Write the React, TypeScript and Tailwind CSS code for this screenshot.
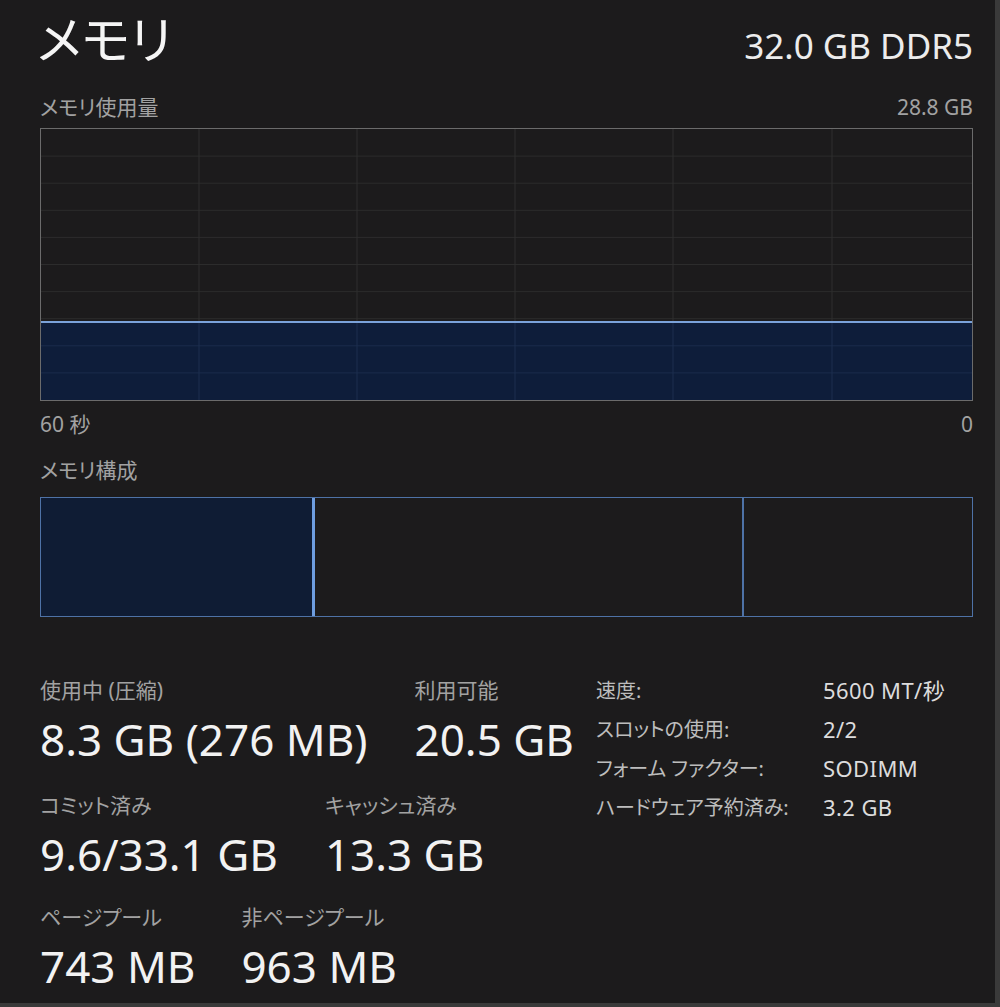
import React from 'react'

const labelCls = "text-[21px] leading-[20px] text-[#a2a2a2] whitespace-nowrap"
const valueCls = "mt-[15px] text-[44px] leading-[48px] text-[#f2f2f2] whitespace-nowrap"

function Stat({ label, value }: { label: string; value: string }) {
  return (
    <div className="flex flex-col">
      <div className={labelCls}>{label}</div>
      <div className={valueCls}>{value}</div>
    </div>
  )
}

const specs = [
  { label: '速度:', value: '5600 MT/秒' },
  { label: 'スロットの使用:', value: '2/2' },
  { label: 'フォーム ファクター:', value: 'SODIMM' },
  { label: 'ハードウェア予約済み:', value: '3.2 GB' },
]

// vertical grid positions inside the usage graph (px from inner left edge)
const vLines = [158, 316, 474, 632, 791]
const hLines = [1, 2, 3, 4, 5, 6, 7, 8, 9].map(i => i * 27.1)

function UsageGraph() {
  const fillTop = 193
  return (
    <div className="mt-[11px] h-[273px] border border-[#6b6b6b] bg-[#1c1b1c]">
      <svg width="931" height="271" viewBox="0 0 931 271" className="block">
        {hLines.map(y => (
          <line key={y} x1="0" x2="931" y1={y} y2={y} stroke="#2c2c2c" strokeWidth="1" />
        ))}
        <rect x="0" y={fillTop} width="931" height={271 - fillTop} fill="#0e1d3a" />
        {hLines.filter(y => y > fillTop).map(y => (
          <line key={'f' + y} x1="0" x2="931" y1={y} y2={y} stroke="#1b2c4c" strokeWidth="1" />
        ))}
        {vLines.map(x => (
          <React.Fragment key={x}>
            <line x1={x} x2={x} y1="0" y2={fillTop} stroke="#2e2e2e" strokeWidth="1" />
            <line x1={x} x2={x} y1={fillTop} y2="271" stroke="#1d2e4e" strokeWidth="1" />
          </React.Fragment>
        ))}
        <line x1="0" x2="931" y1={fillTop} y2={fillTop} stroke="#7aa2da" strokeWidth="2" />
      </svg>
    </div>
  )
}

export default function App() {
  return (
    <div className="w-[1000px] h-[1007px] bg-[#1c1b1c] border-r-[5px] border-b-[4px] border-[#3a3a3a] pl-[40px] pr-[22px] font-['Noto_Sans','Noto_Sans_CJK_JP',sans-serif] [font-feature-settings:'palt']">
      {/* Header */}
      <div className="flex justify-between items-baseline h-[97px] pt-[9px]">
        <h1 className="text-[51px] leading-[60px] text-[#f5f5f5] font-normal -ml-[3px]">メモリ</h1>
        <div className="text-[35px] leading-[40px] text-[#ececec]">32.0 GB DDR5</div>
      </div>

      <div className="flex justify-between h-[20px] leading-[20px] text-[21px] text-[#a2a2a2]">
        <span>メモリ使用量</span>
        <span>28.8 GB</span>
      </div>

      <UsageGraph />

      <div className="mt-[13px] flex justify-between h-[20px] leading-[20px] text-[21px] text-[#a2a2a2]">
        <span>60 秒</span>
        <span>0</span>
      </div>

      <div className="mt-[26px] h-[20px] leading-[20px] text-[21px] text-[#a2a2a2]">メモリ構成</div>

      {/* Memory composition */}
      <div className="mt-[17px] h-[120px] flex border border-[#4e72a6]">
        <div className="w-[274px] bg-[#0f1c34] border-r-[3px] border-[#6e9ddf]" />
        <div className="w-[429px] border-r-[2px] border-[#4e72a6]" />
        <div className="flex-1" />
      </div>

      {/* Stats */}
      <div className="mt-[54px] flex items-start">
        <div className="w-[556px] pt-[9px]">
          <div className="flex gap-[47px]">
            <Stat label="使用中 (圧縮)" value="8.3 GB (276 MB)" />
            <Stat label="利用可能" value="20.5 GB" />
          </div>
          <div className="mt-[32px] flex gap-[47px]">
            <Stat label="コミット済み" value="9.6/33.1 GB" />
            <Stat label="キャッシュ済み" value="13.3 GB" />
          </div>
          <div className="mt-[29px] flex gap-[46px]">
            <Stat label="ページプール" value="743 MB" />
            <Stat label="非ページプール" value="963 MB" />
          </div>
        </div>
        <div className="grid grid-cols-[227px_auto] auto-rows-[39px] leading-[39px]">
          {specs.map(s => (
            <React.Fragment key={s.label}>
              <span className="text-[20px] text-[#bdbdbd] whitespace-nowrap">{s.label}</span>
              <span className="text-[22px] tracking-[0.4px] text-[#dcdcdc] whitespace-nowrap">{s.value}</span>
            </React.Fragment>
          ))}
        </div>
      </div>
    </div>
  )
}
